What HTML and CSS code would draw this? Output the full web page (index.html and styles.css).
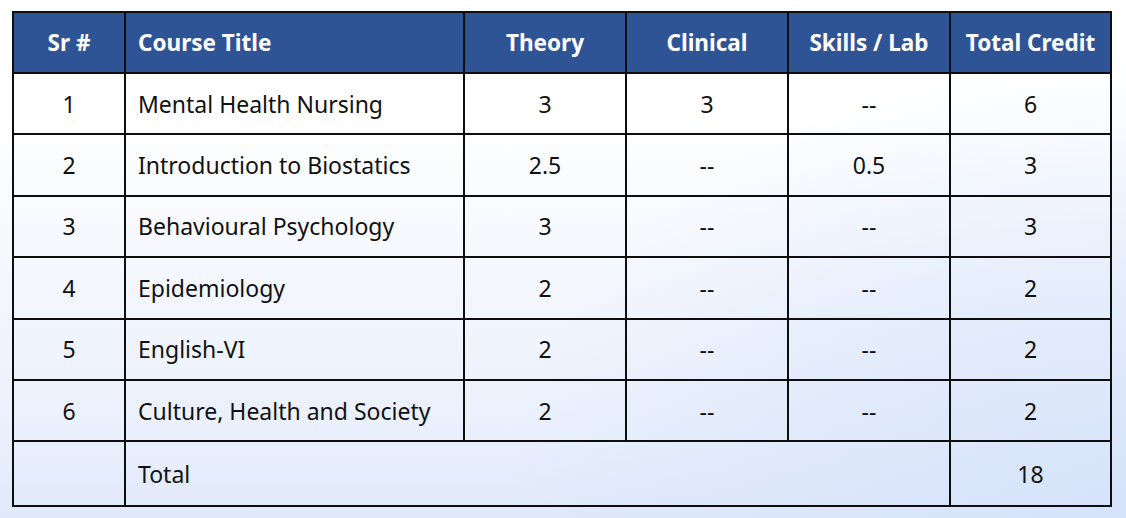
FILE: index.html
```html
<!DOCTYPE html>
<html lang="en">
<head>
<meta charset="utf-8">
<title>Course Credits</title>
<link rel="stylesheet" href="styles.css">
</head>
<body>
<main class="page">
  <table class="credits">
    <colgroup>
      <col class="c-sr"><col class="c-title"><col class="c-num"><col class="c-num"><col class="c-num"><col class="c-total">
    </colgroup>
    <thead>
      <tr>
        <th class="center">Sr #</th>
        <th class="left">Course Title</th>
        <th class="center">Theory</th>
        <th class="center">Clinical</th>
        <th class="center">Skills / Lab</th>
        <th class="center">Total Credit</th>
      </tr>
    </thead>
    <tbody>
      <tr><td class="center">1</td><td class="left">Mental Health Nursing</td><td class="center">3</td><td class="center">3</td><td class="center">--</td><td class="center">6</td></tr>
      <tr><td class="center">2</td><td class="left">Introduction to Biostatics</td><td class="center">2.5</td><td class="center">--</td><td class="center">0.5</td><td class="center">3</td></tr>
      <tr><td class="center">3</td><td class="left">Behavioural Psychology</td><td class="center">3</td><td class="center">--</td><td class="center">--</td><td class="center">3</td></tr>
      <tr><td class="center">4</td><td class="left">Epidemiology</td><td class="center">2</td><td class="center">--</td><td class="center">--</td><td class="center">2</td></tr>
      <tr><td class="center">5</td><td class="left">English-VI</td><td class="center">2</td><td class="center">--</td><td class="center">--</td><td class="center">2</td></tr>
      <tr><td class="center">6</td><td class="left">Culture, Health and Society</td><td class="center">2</td><td class="center">--</td><td class="center">--</td><td class="center">2</td></tr>
      <tr class="total-row"><td></td><td class="left" colspan="4">Total</td><td class="center">18</td></tr>
    </tbody>
  </table>
</main>
</body>
</html>
```
FILE: styles.css
```css
html, body {
  margin: 0;
  padding: 0;
}
body {
  width: 1126px;
  height: 518px;
  overflow: hidden;
  font-family: "Noto Sans", "Open Sans", sans-serif;
  color: #111111;
  background:
    radial-gradient(ellipse 55% 90% at 100% 100%, rgba(210, 225, 250, 0.8), rgba(210, 225, 250, 0) 100%),
    linear-gradient(to bottom, #ffffff 0%, #ffffff 22%, #e9effc 85%, #e0e9fa 100%);
}
.page {
  padding: 11px 0 0 12px;
}
.credits {
  border-collapse: collapse;
  width: 1098px;
  table-layout: fixed;
  border: 2px solid #0e0e0e;
}
.c-sr { width: 112px; }
.c-title { width: 339px; }
.c-num { width: 162px; }
.c-total { width: 161px; }
.credits th,
.credits td {
  border: 2px solid #0e0e0e;
  padding: 0 12px;
  white-space: nowrap;
}
.credits th {
  background: #2f5496;
  color: #ffffff;
  font-weight: 700;
  font-size: 22.5px;
  height: 59px;
}
.credits td {
  font-size: 23px;
  height: 59.4px;
}
.credits .total-row td {
  height: 63px;
}
.center { text-align: center; }
.left { text-align: left; }
```
